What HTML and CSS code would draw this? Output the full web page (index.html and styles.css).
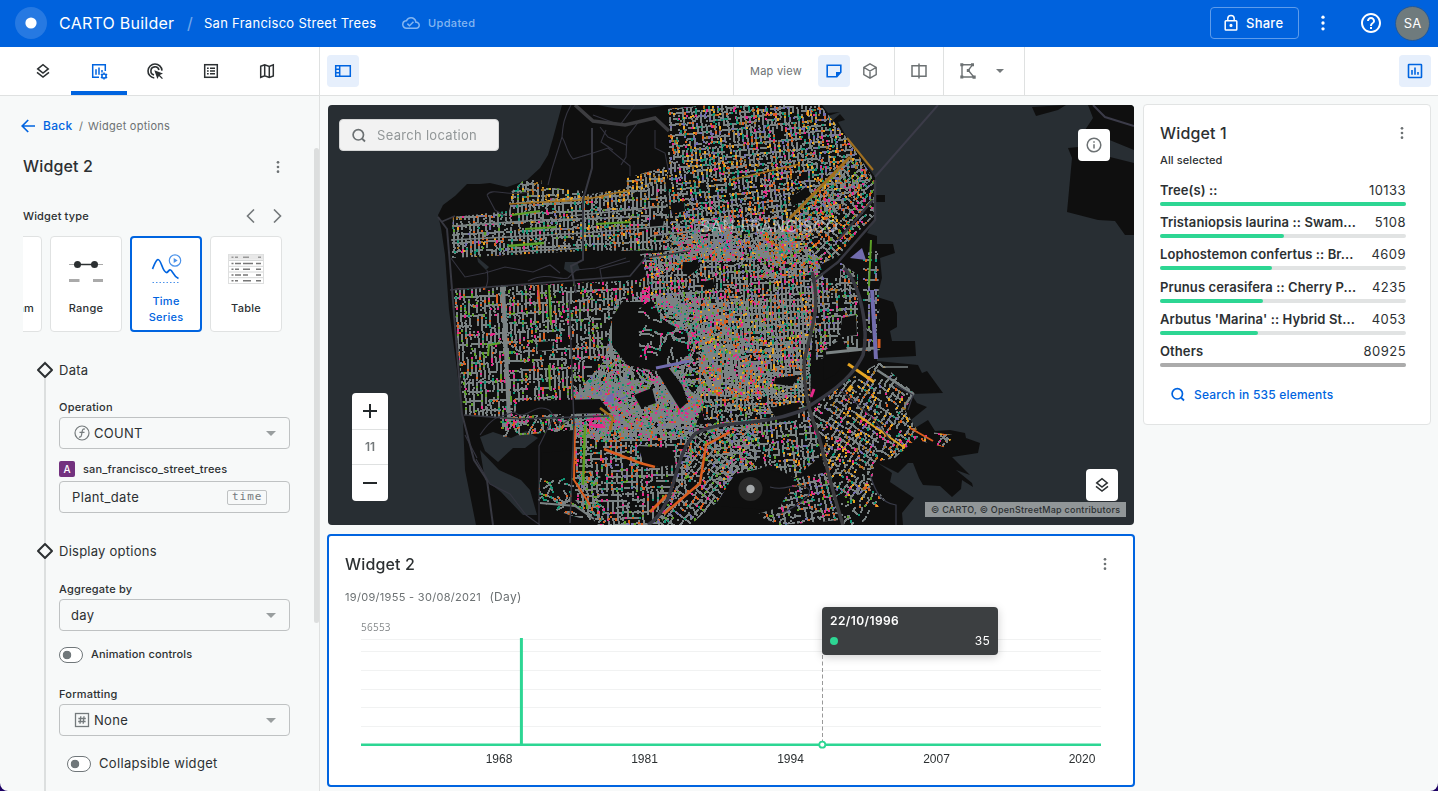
FILE: index.html
```html
<!DOCTYPE html>
<html lang="en">
<head>
<meta charset="utf-8">
<title>CARTO Builder</title>
<link rel="stylesheet" href="styles.css">
</head>
<body>
<svg width="0" height="0" class="defs">
  <symbol id="layers" viewBox="0 0 24 24"><path d="M5 9.2 12 3.6l7 5.6-7 5.6zM4 13.8l8 6.4 8-6.4" fill="none" stroke="currentColor" stroke-width="2"/></symbol>
  <symbol id="dots" viewBox="0 0 24 24"><circle cx="12" cy="5" r="2"/><circle cx="12" cy="12" r="2"/><circle cx="12" cy="19" r="2"/></symbol>
  <symbol id="search" viewBox="0 0 18 18"><circle cx="8.3" cy="8.8" r="5.2" fill="none" stroke="currentColor" stroke-width="1.7"/><path d="m12 12.500 3 3" stroke="currentColor" stroke-width="1.8"/></symbol>
  <symbol id="caret" viewBox="0 0 10 5"><path d="M0 0h10L5 5z"/></symbol>
  <symbol id="diamond" viewBox="0 0 18 18"><path d="m9 2 7 7-7 7-7-7z" fill="#f7f9f9" stroke="#2c3032" stroke-width="2" stroke-linejoin="round"/></symbol>
</svg>
<div class="app">
  <header class="header">
    <svg class="logo" viewBox="0 0 32 32"><circle cx="16" cy="16" r="16" fill="#fff" fill-opacity=".15"/><circle cx="16" cy="16" r="5.6" fill="#fff"/></svg>
    <span class="brand">CARTO Builder</span>
    <span class="slash">/</span>
    <span class="map-name">San Francisco Street Trees</span>
    <svg class="cloud" viewBox="0 0 24 24" fill="currentColor"><path d="M19.35 10.04A7.49 7.49 0 0 0 12 4C9.11 4 6.6 5.64 5.35 8.04A5.994 5.994 0 0 0 0 14c0 3.31 2.69 6 6 6h13c2.76 0 5-2.24 5-5 0-2.64-2.05-4.78-4.65-4.96zM19 18H6c-2.21 0-4-1.79-4-4 0-2.05 1.53-3.76 3.56-3.97l1.07-.11.5-.95A5.469 5.469 0 0 1 12 6c2.62 0 4.88 1.86 5.39 4.43l.3 1.5 1.53.11A2.98 2.98 0 0 1 22 15c0 1.65-1.35 3-3 3zm-9-3.82-2.09-2.09L6.5 13.5 10 17l6.01-6.01-1.41-1.41z"/></svg>
    <span class="updated">Updated</span>
    <span class="grow"></span>
    <span class="share"><svg viewBox="0 0 18 18" fill="none" stroke="currentColor" stroke-width="1.5"><rect x="3.2" y="6.7" width="11.6" height="9.4" rx=".8"/><path d="M5.8 6.5V4.6a3.2 3.2 0 0 1 6.4 0v1.9"/><circle cx="9" cy="11.4" r=".8" fill="currentColor"/></svg>Share</span>
    <svg class="head-dots" fill="currentColor"><use href="#dots"/></svg>
    <svg class="help" viewBox="0 0 24 24" fill="currentColor"><path d="M11 18h2v-2h-2v2zm1-16C6.48 2 2 6.48 2 12s4.48 10 10 10 10-4.48 10-10S17.52 2 12 2zm0 18c-4.41 0-8-3.59-8-8s3.59-8 8-8 8 3.59 8 8-3.59 8-8 8zm0-14c-2.21 0-4 1.79-4 4h2c0-1.1.9-2 2-2s2 .9 2 2c0 2-3 1.75-3 5h2c0-2.25 3-2.5 3-5 0-2.210-1.790-4-4-4z"/></svg>
    <span class="avatar">SA</span>
  </header>

  <div class="body">
    <aside class="side">
      <nav class="tabs">
        <span class="tab"><svg><use href="#layers"/></svg></span>
        <span class="tab active"><svg viewBox="0 0 18 18" fill="none" stroke="currentColor" stroke-width="1.5"><path d="M15.3 9V2.700H2.700v12.600H9M6 7.300v5.400M9 5.500v7.200M12 8v2.500"/><circle cx="14" cy="14" r="2.100"/><path d="M14 10.400v1.400M14 16.200v1.400M10.900 12.200l1.200.7M15.900 15.100l1.200.7M10.900 15.800l1.200-.7M15.900 12.900l1.200-.7"/></svg></span>
        <span class="tab"><svg viewBox="0 0 18 18" fill="none" stroke="currentColor" stroke-width="1.600"><path d="M8.300 16A7 7 0 1 1 16 8.600M8 12.900A4.100 4.100 0 1 1 13 8"/><path d="M8.300 8.300l8.700 3.200-3.200 1.500 3.100 3.200-.9.900-3.100-3.200-1.500 3.100z" fill="currentColor" stroke="none"/></svg></span>
        <span class="tab"><svg viewBox="0 0 18 18" fill="none" stroke="currentColor" stroke-width="1.500"><rect x="2.700" y="2.700" width="12.600" height="12.600"/><path d="M5 6.200h1.700M8 6.200h5M5 9h1.700M8 9h5M5 11.800h1.700M8 11.800h5"/></svg></span>
        <span class="tab"><svg viewBox="0 0 18 18" fill="none" stroke="currentColor" stroke-width="1.500"><path d="m2.700 4.200 4-1.500 4.600 1.700 4-1.600v11.100l-4 1.500-4.600-1.700-4 1.600zM6.700 2.700v11M11.300 4.400v11"/></svg></span>
      </nav>
      <div class="panel">
        <div class="crumbs"><svg viewBox="0 0 14 14" fill="none" stroke="currentColor" stroke-width="1.700"><path d="M14 7H1.500M7.200 1 1.200 7l6 6"/></svg><b>Back</b><i>/</i><span>Widget options</span></div>
        <div class="title-row"><h2>Widget 2</h2><svg><use href="#dots"/></svg></div>
        <div class="type-row"><span>Widget type</span><svg viewBox="0 0 36 14" fill="none" stroke="currentColor" stroke-width="1.600"><path d="M8 .5 1.500 7 8 13.500M28 .5 34.500 7 28 13.500"/></svg></div>
        <div class="types">
          <div class="type"><span>Histogram</span></div>
          <div class="type"><svg viewBox="0 0 40 40"><path d="M3 16.500h34" stroke="#aaa"/><path d="M11 16.500h18" stroke="#2c3032" stroke-width="1.500"/><circle cx="11.500" cy="16.500" r="3.500" fill="#2c3032"/><circle cx="28.500" cy="16.500" r="3.500" fill="#2c3032"/><path d="M3 32.500h10.500M27 32.500h10" stroke="#aaa" stroke-width="3"/></svg><span>Range</span></div>
          <div class="type on"><svg viewBox="0 0 40 40" fill="none" stroke="#0064e0"><path d="M6.500 21c1.500-3 3-9 5.500-9.500 3.500 0 4.500 14 9 13 2-1.500 2-3 3.500-2.500 2 .5 2.500 6 8 8.500" stroke-width="1.700"/><circle cx="29" cy="12.500" r="5.700" stroke="#4b92ea" stroke-width="1.200"/><path d="m27.700 10 4 2.500-4 2.500z" fill="#4b92ea" stroke="none"/><path d="M6.500 34.500h27" stroke="#4b92ea" stroke-dasharray="1.500 2"/></svg><span>Time<br>Series</span></div>
          <div class="type"><svg viewBox="0 0 40 40"><rect x="2.500" y="6.500" width="35" height="29" fill="#fff" stroke="#dedfdf"/><path d="M3 9.300h34" stroke="#e8e8e8" stroke-width="5"/><path d="M3 12.500h34M3 18.300h34M3 24h34M3 29.700h34" stroke="#d5d7d7"/><path d="M5.500 9.300h2m1.500 0h3m5 0h6m9 0h3" stroke="#999" stroke-width="1.500"/><path d="M5.500 15.500h2m1.500 0h6m2 0h10m3 0h5M5.500 21.200h2m1.500 0h4m4 0h7m6 0h5M5.500 27h2m1.500 0h6m2 0h5m8 0h5M5.500 32.700h2m1.500 0h3m5 0h8m5 0h5" stroke="#777" stroke-width="1.500"/></svg><span>Table</span></div>
        </div>
        <div class="steps">
          <section class="step data">
            <h3><svg><use href="#diamond"/></svg>Data</h3>
            <label>Operation</label>
            <div class="field"><svg class="ic" viewBox="0 0 16 16" fill="none" stroke="#747a7c" stroke-width="1.200"><circle cx="8" cy="8" r="7"/><path d="M11 4.200c-1.500-.7-2.500.3-2.800 2l-.7 4c-.3 1.500-1.200 2.300-2.500 1.700M5.500 7.300h5" /></svg><span>COUNT</span><svg class="caret"><use href="#caret"/></svg></div>
            <div class="source"><b>A</b>san_francisco_street_trees</div>
            <div class="field plant"><span>Plant_date</span><code>time</code></div>
          </section>
          <section class="step display">
            <h3><svg><use href="#diamond"/></svg>Display options</h3>
            <label>Aggregate by</label>
            <div class="field day"><span>day</span><svg class="caret"><use href="#caret"/></svg></div>
            <div class="switch small"><i></i><span>Animation controls</span></div>
            <label>Formatting</label>
            <div class="field"><svg class="ic" viewBox="0 0 16 16" fill="none" stroke="#747a7c" stroke-width="1.300"><rect x="1.500" y="1.500" width="13" height="13"/><path d="M6.800 4.200 6 11.800M10 4.200l-.8 7.600M4.400 6.500h7.400M4.200 9.500h7.400"/></svg><span>None</span><svg class="caret"><use href="#caret"/></svg></div>
            <div class="switch large"><i></i><span>Collapsible widget</span></div>
          </section>
        </div>
        <span class="scroll"></span>
      </div>
    </aside>

    <div class="main">
      <div class="toolbar">
        <span class="tool on"><svg viewBox="0 0 18 18" fill="none" stroke="currentColor" stroke-width="1.500"><path d="M1.700 3.700h14.600v10.600H1.700zM5.700 3.700v10.600M1.700 7.200h4M1.700 10.800h4"/></svg></span>
        <div class="view">
          <span class="view-label">Map view</span>
          <span class="tool on"><svg viewBox="0 0 18 18" fill="none" stroke="currentColor" stroke-width="1.600"><path d="M2.200 3.200h13.600v7l-4 4.600H2.200z"/><path d="M11 15v-5h5z" fill="currentColor" stroke="none"/></svg></span>
          <span class="tool"><svg viewBox="0 0 18 18" fill="none" stroke="currentColor" stroke-width="1.400"><path d="m9 1.900 6.200 3.500v7.200L9 16.100l-6.200-3.500V5.400zM2.800 5.400 9 9l6.200-3.600M9 9v7"/></svg></span>
        </div>
        <div class="split"><svg viewBox="0 0 18 18" fill="none" stroke="currentColor" stroke-width="1.500"><path d="M2 3.700h14v10.600H2zM9 1.500v15"/></svg></div>
        <div class="poly"><svg viewBox="0 0 18 18" fill="none" stroke="currentColor" stroke-width="1.400"><path d="M3 2.800h10.500L9.300 8.300l5.500 6.700H3z"/><path d="M1.300 1.300h3v3h-3zM12 1.300h3v3h-3zM7.800 7h3v3h-3zM1.300 13.500h3v3h-3zM13.500 13.500h3.200v3.200h-3.200z" fill="currentColor" stroke="none"/></svg><svg class="caret"><use href="#caret"/></svg></div>
        <span class="grow"></span>
        <span class="tool on"><svg viewBox="0 0 18 18" fill="none" stroke="currentColor" stroke-width="1.600"><rect x="2.500" y="2.500" width="13" height="13" rx=".5"/><path d="M6 8v4.800M9 5.500v7.300M12 10v2.800"/></svg></span>
      </div>
      <div class="content">
        <div class="center">
          <div class="map">
            <svg class="map-layer" viewBox="328 105 806 420">
              <path fill="#0f0f0f" d="M562 105 553 138 548 155 540 168 527 180 507 187 490 183 480 184 467 184 455 196 443 205 438 215 441 228 445 255 449 310 457 370 463 420 465 470 476 525H903L902 513 914 498 890 482 892 473 878 463 898 473 908 463 913 463 919 478 923 485 940 486 952 497 961 489 962 480 973 487 972 483 956 470 970 475 952 457 978 453 980 443 966 438 965 433 950 430 935 431 928 420 915 428 911 420 927 407 917 403 911 394 943 393 927 371 922 373 918 365 877 361 877 358 916 356 915 341 892 341 890 331 897 327 897 313 893 302 877 297 882 278 880 258 895 253 893 244 877 244 877 236 867 233 875 218V202h10v-7h-10V177L847 138 838 122 845 120 840 114 832 121 828 116 840 112 828 113 822 105Z"/>
              <path fill="#0f0f0f" d="M1032 107 1066 105 1058 110 1036 116ZM1088 105 1093 118 1085 130 1134 150V105ZM1068 148 1072 158 1067 212 1098 220 1115 221 1125 235H1134V163L1110 157 1078 147Z"/>
              <g fill="#282e33"><path d="M598 105h68c-20 5-40 7-68 0zM480 437l13-5 18 6 15-7 12 7-13 10h-12l-15 14-13-11z"/><path d="m480 450 19 20 22 10 9 10 7 25h-14l-22-23-16-12zM477 257l12 10-3 3-8-8zM565 262h12l3 8-10 3-6-4z"/></g>
              <path d="m1093 105 12 12 29 9M875 177l63-72" fill="none" stroke="#3b3b48" stroke-width="2"/>
            </svg>
            <canvas id="trees" class="map-layer" width="806" height="420"></canvas>
            <svg class="map-layer" viewBox="328 105 806 420" fill="none">
              <g stroke="#34343f" stroke-width="1.100"><path d="M571 105c-8 14-8 22-9 32l-10 32-4 16M562 137c5 8 4 14 11 22l20-6 15-5 22 18v10M600 127l8 10 18 8M640 120l-13 17-1 20-5 8M593 115l27 10 15-20M487 195c5-8 20 2 42-3M487 195l8 15 10 6M655 130v18l10 5 4 20M606 130l-5 12 12 8"/><path d="M451 258l14 19 20-4 20-6 28 5 17-7 10 8M487 270c2 10 0 15-2 20M528 281c20-10 30 0 40-3l8-8 20-2 30-10M602 281l-2-12 30-8"/><path d="M465 435l12 23M480 435c8-12 15-18 22-19l12-4c12 10 20-10 35-2l12 15 12-8M554 416l-15 30v79M476 459l14 25 20 10 16 21 14 10"/></g>
              <g stroke="#373841"><path d="M438 217l9 12 3 35 12 150 12 46 13 20 6 45" stroke-width="2"/><path d="M441 222l14-6M450 290l180-14 15-18 45-7" stroke-width="1.700"/><path d="M592 128v40l-9 32v60l-12 6 5 27" stroke-width="2"/><path d="M569 293l5 130-4 100" stroke-width="1.500"/><path d="M575 105l18 16 32 4 30-7 14 13" stroke-width="3.500" stroke="#3d3d40"/><path d="M464 415l55 4 90-3" stroke-width="1.700"/><path d="M648 525c30-20 24-70 48-92 30-15 55-4 105-22 25-15 50-30 62-56 6-25-2-70-19-87" stroke-width="3.500"/><path d="M812 272c10 35-2 60-8 90 0 30 5 50 15 75 8 30 12 50 24 88" stroke-width="3.500" stroke="#3c3c3f"/><path d="M875 180v40l-37 42-26 20M838 240l35-40" stroke-width="2.500"/></g>
              <g stroke="#393b49" stroke-width="1.200"><path d="M770 487c18 5 20-5 35 0s-10 20-25 27M870 475c5 15 10 28 26 30v20M895 385l18 10-5 15M840 390c18 15 30 22 50 50"/></g>
              <text class="city" x="700" y="232" textLength="138">SAN FRANCISCO</text>
              <circle cx="750.500" cy="489" r="12" fill="#999" fill-opacity=".2"/><circle cx="750.500" cy="489" r="4.200" fill="#a5a9ab"/>
            </svg>
            <div class="map-search"><svg><use href="#search"/></svg>Search location</div>
            <span class="map-btn info"><svg viewBox="0 0 18 18" fill="none" stroke="currentColor" stroke-width="1.500"><circle cx="9" cy="9" r="6.800"/><path d="M9 8.200v4.300M9 5.200v1.600"/></svg></span>
            <div class="zoom"><span><svg viewBox="0 0 14 14"><path d="M0 7h14M7 0v14"/></svg></span><em>11</em><span><svg viewBox="0 0 14 14"><path d="M0 7h14"/></svg></span></div>
            <span class="map-btn lay"><svg><use href="#layers"/></svg></span>
            <span class="credits">© CARTO, © OpenStreetMap contributors</span>
          </div>
          <div class="series">
            <div class="card-head"><h2>Widget 2</h2><svg><use href="#dots"/></svg></div>
            <p class="range">19/09/1955 - 30/08/2021 <span>(Day)</span></p>
            <svg class="chart" viewBox="345 612 776 160">
              <path d="M361 639.500h740M361 651.500h740M361 670.500h740M361 689.500h740M361 707.500h740M361 726.500h740" stroke="#f1f2f2"/>
              <text class="max" x="361" y="631">56553</text>
              <path d="M822.500 655v86" stroke="#999" stroke-dasharray="4 2.500"/>
              <path d="M361 744.700h740" stroke="#2dd693" stroke-width="2.600"/>
              <path d="M521.400 745V638" stroke="#2dd693" stroke-width="3"/>
              <circle cx="822.300" cy="744.700" r="3" fill="#fff" stroke="#2dd693" stroke-width="1.800"/>
              <g class="years"><text x="499" y="763">1968</text><text x="644.500" y="763">1981</text><text x="790.500" y="763">1994</text><text x="936.500" y="763">2007</text><text x="1082" y="763">2020</text></g>
            </svg>
            <div class="tip"><b>22/10/1996</b><div><i></i><span>35</span></div></div>
          </div>
        </div>
        <div class="category">
          <div class="card-head"><h2>Widget 1</h2><svg><use href="#dots"/></svg></div>
          <p class="selected">All selected</p>
          <div class="cat"><b>Tree(s) ::</b><span>10133</span><i><u style="width:100%"></u></i></div>
          <div class="cat"><b>Tristaniopsis laurina :: Swam...</b><span>5108</span><i><u style="width:50.4%"></u></i></div>
          <div class="cat"><b>Lophostemon confertus :: Br...</b><span>4609</span><i><u style="width:45.5%"></u></i></div>
          <div class="cat"><b>Prunus cerasifera :: Cherry P...</b><span>4235</span><i><u style="width:41.8%"></u></i></div>
          <div class="cat"><b>Arbutus 'Marina' :: Hybrid St...</b><span>4053</span><i><u style="width:40%"></u></i></div>
          <div class="cat others"><b>Others</b><span>80925</span><i><u style="width:100%"></u></i></div>
          <div class="find"><svg><use href="#search"/></svg>Search in 535 elements</div>
        </div>
      </div>
    </div>
  </div>
</div>
<script src="trees.js"></script>
</body>
</html>
```
FILE: styles.css
```css
* { box-sizing: border-box; }
body { margin: 0; background: #1c0063; font-family: Inter, "Liberation Sans", sans-serif; letter-spacing: .25px; color: #2c3032; font-size: 13px; }
h2, h3, p { margin: 0; font-weight: 400; }
i, em { font-style: normal; }
.defs { position: absolute; }
.app { height: 791px; display: flex; flex-direction: column; background: #f7f9f9; border-radius: 0 0 8px 8px; overflow: hidden; }
.grow { flex: 1; }

.header { height: 47px; flex: none; background: #0062dd; color: #fff; display: flex; align-items: center; padding: 0 8px 1px 15px; }
.logo { width: 32px; height: 32px; margin-right: 12px; }
.brand { font-size: 16px; width: 128px; white-space: nowrap; letter-spacing: .25px; }
.slash { width: 17px; font-size: 16px; opacity: .45; }
.map-name { width: 198px; font-size: 13px; white-space: nowrap; letter-spacing: .28px; }
.cloud { width: 18px; height: 18px; color: #84b6f1; }
.updated { color: #84b6f1; font-size: 11px; margin-left: 8px; font-weight: 500; letter-spacing: .35px; }
.share { width: 89px; height: 32px; border: 1px solid #5e9ceb; border-radius: 4px; display: flex; align-items: center; padding-left: 11px; font-weight: 500; gap: 6px; }
.share svg { width: 18px; height: 18px; }
.head-dots { width: 20px; height: 20px; margin: 0 26px 0 14px; }
.help { width: 24px; height: 24px; margin-right: 12px; }
.avatar { width: 35px; height: 35px; border-radius: 50%; background: #6f7b7d; border: 1px solid #21599c; display: grid; place-items: center; font-size: 13px; letter-spacing: 0; }

.body { flex: 1; display: flex; min-height: 0; }
.side { width: 320px; border-right: 1px solid #dfe1e1; display: flex; flex-direction: column; }
.tabs { height: 49px; flex: none; background: #fff; border-bottom: 1px solid #dfe1e1; display: flex; padding-left: 15px; }
.tab { width: 56px; height: 48px; display: grid; place-items: center; border-bottom: 4px solid transparent; padding-top: 4px; }
.tab svg { width: 18px; height: 18px; }
.tab.active { color: #0064e0; border-color: #0064e0; }
.panel { flex: 1; position: relative; padding: 14px 29px 0 23px; overflow: hidden; min-height: 0; }
.crumbs { display: flex; align-items: center; height: 32px; font-size: 11px; color: #6c7173; }
.crumbs svg { width: 14px; height: 14px; margin: 0 8px 0 -2px; color: #0064e0; }
.crumbs b { font-size: 12px; font-weight: 500; color: #0064e0; width: 36px; letter-spacing: .3px; padding-bottom: 1px; }
.crumbs i { width: 9px; }
.title-row { height: 50px; display: flex; align-items: center; justify-content: space-between; }
h2 { font-size: 16px; font-weight: 500; letter-spacing: .15px; }
.title-row h2 { padding-bottom: 2px; }
.title-row svg, .card-head svg { width: 16px; height: 16px; fill: #6c7173; }
.title-row svg { margin-right: 4px; }
.type-row { height: 48px; display: flex; align-items: center; justify-content: space-between; font-size: 11px; font-weight: 500; letter-spacing: .15px; }
.type-row svg { width: 38px; height: 14px; margin-right: 7px; color: #74797b; }
.types { display: flex; gap: 8px; width: 259px; overflow: hidden; margin-top: -4px; }
.type { flex: none; width: 72px; height: 96px; border: 1px solid #e0e2e2; border-radius: 4px; background: #fff; display: flex; flex-direction: column; align-items: center; justify-content: space-between; padding: 11px 0 15px; font-size: 11px; font-weight: 500; line-height: 16px; text-align: center; }
.type:first-child { margin-left: -53px; justify-content: flex-end; letter-spacing: .2px; }
.type svg { width: 40px; height: 40px; flex: none; }
.type.on { border: 2px solid #0064e0; color: #0064e0; padding: 10px 0 5px; }
.steps { position: relative; margin-left: 21px; margin-top: 29px; border-left: 2px solid #dcdfdf; padding-left: 13px; width: 246px; height: 440px; }
.step h3 { height: 18px; display: flex; align-items: center; font-size: 13px; }
.step h3 svg { width: 18px; height: 18px; margin: 0 5px 0 -23px; }
.data { height: 181px; }
label { display: block; font-size: 11px; font-weight: 500; height: 14px; line-height: 14px; margin-bottom: 3px; letter-spacing: .2px; }
.data label { margin-top: 21px; }
.display label { margin-top: 22px; }
.field { width: 231px; height: 32px; border: 1px solid #bfc2c3; border-radius: 4px; display: flex; align-items: center; padding: 0 13px 0 14px; }
.field span { flex: 1; padding-left: 4px; letter-spacing: .3px; }
.field .ic { width: 16px; height: 16px; }
.caret { width: 10px; height: 5px; fill: #999e9f; }
.source { height: 16px; margin: 12px 0 4px; display: flex; align-items: center; font-size: 11px; font-weight: 500; gap: 8px; letter-spacing: .15px; }
.source b { width: 16px; height: 16px; background: #73327f; color: #fff; border-radius: 2px; font-size: 10px; font-weight: 500; display: grid; place-items: center; letter-spacing: 0; }
.plant { padding: 0 22px 0 8px; }
.plant span { letter-spacing: .35px; }
.day { padding-left: 7px; }
.day span { padding-bottom: 1px; }
code { font: 11px "DejaVu Sans Mono", monospace; letter-spacing: 1px; color: #747a7c; border: 1px solid #bfc2c3; border-radius: 2px; padding: 0 4px; width: 40px; height: 15px; line-height: 12px; }
.switch { display: flex; align-items: center; gap: 8px; height: 16px; }
.switch span { padding-bottom: 2px; }
.switch i { width: 24px; height: 16px; border: 1px solid #70777a; border-radius: 8px; background: #fff radial-gradient(circle at 7px 7px, #70777a 4px, transparent 4.600px); }
.small { font-size: 11px; font-weight: 500; margin-top: 16px; letter-spacing: .15px; }
.display .small + label { margin-top: 24px; }
.large { margin: 20px 0 0 8px; letter-spacing: .33px; }
.scroll { position: absolute; right: 0; top: 52px; width: 5px; height: 475px; background: #dcdede; border-radius: 3px; }

.main { flex: 1; display: flex; flex-direction: column; min-width: 0; }
.toolbar { height: 49px; flex: none; background: #fff; border-bottom: 1px solid #dfe1e1; display: flex; align-items: center; padding: 0 7px; color: #6c7173; }
.tool { width: 32px; height: 32px; border-radius: 4px; display: grid; place-items: center; }
.toolbar svg { width: 18px; height: 18px; }
.tool.on { background: #e6effc; color: #0064e0; }
.view { margin-left: 374px; width: 162px; height: 48px; border-left: 1px solid #dfe1e1; border-right: 1px solid #dfe1e1; padding-left: 16px; display: flex; align-items: center; gap: 4px; font-size: 11px; }
.view-label { width: 64px; white-space: nowrap; }
.split, .poly { height: 48px; border-right: 1px solid #dfe1e1; display: flex; align-items: center; }
.split { width: 49px; padding-left: 15px; }
.poly { width: 81px; padding-left: 15px; gap: 19px; }
.toolbar .caret { width: 8px; height: 4px; fill: #74797b; }
.content { display: flex; gap: 8px; padding: 8px 7px 0; align-items: flex-start; }
.center { width: 808px; display: flex; flex-direction: column; gap: 9px; }
.map { position: relative; width: 806px; height: 420px; margin: 1px 0 0 1px; background: #282e33; border-radius: 4px; overflow: hidden; }
.map-layer { position: absolute; inset: 0; width: 806px; height: 420px; }
.city { font-size: 16px; letter-spacing: 0; fill: #d5e3ea; fill-opacity: .6; }
.map-search { position: absolute; left: 11px; top: 14px; width: 160px; height: 32px; background: #f2f2f2; border: 1px solid #d5d6d6; border-radius: 4px; color: #929798; display: flex; align-items: center; padding-left: 10px; gap: 9px; letter-spacing: .3px; }
.map-search svg { width: 18px; height: 18px; color: #6c7173; }
.map-btn { position: absolute; width: 32px; height: 32px; background: #fff; border-radius: 4px; display: grid; place-items: center; }
.map-btn svg { width: 18px; height: 18px; }
.info { left: 750px; top: 24px; color: #6c7173; }
.lay { left: 758px; top: 364px; }
.zoom { position: absolute; left: 24px; top: 288px; width: 36px; height: 108px; background: #fff; border-radius: 4px; text-align: center; }
.zoom span { display: grid; place-items: center; height: 36px; }
.zoom svg { width: 14px; height: 14px; stroke: #23282a; stroke-width: 2; }
.zoom em { display: block; height: 36px; line-height: 34px; border: solid #dfe1e1; border-width: 1px 0; color: #74797b; font-size: 12px; font-weight: 600; letter-spacing: 0; }
.credits { position: absolute; right: 8px; bottom: 8px; height: 15px; width: 201px; line-height: 15px; padding-left: 6px; background: #919698; font-size: 9px; font-weight: 500; white-space: nowrap; }
.series { position: relative; height: 253px; border: 2px solid #0064e0; border-radius: 4px; background: #fff; padding: 16px; }
.card-head { display: flex; justify-content: space-between; align-items: center; height: 24px; }
.series .card-head svg { margin-right: 4px; }
.range { margin-top: 14px; height: 14px; line-height: 14px; font-size: 11px; color: #6c7173; letter-spacing: .3px; }
.range span { margin-left: 5px; font-size: 12px; }
.chart { width: 776px; height: 160px; margin-top: 8px; display: block; }
.max { font: 10px "Open Sans", sans-serif; fill: #85898b; }
.years { font: 12px "Liberation Sans", sans-serif; letter-spacing: 0; text-anchor: middle; fill: #2c3032; }
.tip { position: absolute; left: 493px; top: 71px; width: 176px; height: 48px; background: #3c3f41; border-radius: 4px; color: #fff; font-size: 12px; padding: 6px 8px; line-height: 16px; box-shadow: 0 2px 10px rgba(0,0,0,.2); }
.tip b { font-weight: 600; letter-spacing: .4px; }
.tip div { display: flex; justify-content: space-between; align-items: center; margin-top: 4px; }
.tip i { width: 8px; height: 8px; border-radius: 50%; background: #2dd693; }
.category { width: 288px; height: 321px; background: #fff; border: 1px solid #e2e4e4; border-radius: 4px; padding: 16px 24px 0 16px; }
.category .card-head svg { margin-right: -4px; }
.selected { font-size: 11px; font-weight: 500; margin: 8px 0 13px; line-height: 14px; letter-spacing: .1px; }
.cat { display: flex; flex-wrap: wrap; justify-content: space-between; align-content: flex-start; height: 32.200px; line-height: 18px; padding-top: 1px; }
.cat b { font-weight: 600; letter-spacing: .1px; white-space: nowrap; }
.cat span { letter-spacing: .45px; }
.cat i { width: 100%; height: 4px; background: #e1e3e3; border-radius: 2px; margin-top: 3px; }
.cat u { display: block; height: 4px; border-radius: 2px; background: #2dd693; }
.others u { background: #ababab; }
.find { display: flex; align-items: center; gap: 7px; margin: 12px 0 0 9px; font-size: 12px; font-weight: 500; color: #0064e0; letter-spacing: .2px; }
.find svg { width: 18px; height: 18px; }
```
FILE: trees.js
```javascript
// Street tree points, generated along the street grid of each district.
const ctx = document.getElementById('trees').getContext('2d');
ctx.translate(-328, -105);

let seed = 7;
function rnd() {
  seed = (seed * 1664525 + 1013904223) >>> 0;
  return seed / 4294967296;
}

const GRAY = '#7b8384';
const C = { t: '#109474', o: '#db5f1f', p: '#726cae', k: '#e7298a', g: '#5ba027', y: '#e6a422', b: '#a2701f' };

function pick(mix) { return C[mix[Math.floor(rnd() * mix.length)]]; }

function trace(pts) {
  ctx.beginPath();
  for (let i = 0; i < pts.length; i += 2) ctx.lineTo(pts[i], pts[i + 1]);
  ctx.closePath();
}

// angle in degrees, sx/sy are the street spacings, fill is the share of street that has trees
function grid(pts, angle, sx, sy, fill, colour, mix) {
  ctx.save();
  trace(pts);
  ctx.clip();
  let x0 = 1e4, x1 = 0, y0 = 1e4, y1 = 0;
  for (let i = 0; i < pts.length; i += 2) {
    x0 = Math.min(x0, pts[i]); x1 = Math.max(x1, pts[i]);
    y0 = Math.min(y0, pts[i + 1]); y1 = Math.max(y1, pts[i + 1]);
  }
  const cx = (x0 + x1) / 2, cy = (y0 + y1) / 2;
  const r = Math.hypot(x1 - x0, y1 - y0) / 2;
  const a = angle * Math.PI / 180, ca = Math.cos(a), sa = Math.sin(a);
  const late = [];
  function dot(u, v) {
    const x = cx + u * ca - v * sa, y = cy + u * sa + v * ca;
    if (x < x0 || x > x1 || y < y0 || y > y1) return;
    const px = Math.round(x), py = Math.round(y);
    if (rnd() < colour * 0.52) late.push(px, py);
    ctx.fillStyle = GRAY;
    ctx.fillRect(px, py, 2, 2);
  }
  function line(along, w) {
    let on = true;
    for (let k = -r; k < r; k += 1.7) {
      if (rnd() < 0.45) on = rnd() < fill;
      if (!on) continue;
      const j = rnd() < 0.14 ? (rnd() - 0.5) * 4 : 0;
      if (along) dot(k, w + j); else dot(w + j, k);
    }
  }
  for (let w = -r; w < r; w += sx) line(false, w);
  for (let w = -r; w < r; w += sy) line(true, w);
  // coloured points go over the gray ones
  for (let i = 0; i < late.length; i += 2) {
    ctx.fillStyle = pick(mix);
    ctx.fillRect(late[i], late[i + 1], 2, rnd() < 0.25 ? 3 : 2);
  }
  ctx.restore();
}

// winding hillside streets
function hills(pts, n, colour, mix) {
  ctx.save();
  trace(pts);
  ctx.clip();
  let x0 = 1e4, x1 = 0, y0 = 1e4, y1 = 0;
  for (let i = 0; i < pts.length; i += 2) {
    x0 = Math.min(x0, pts[i]); x1 = Math.max(x1, pts[i]);
    y0 = Math.min(y0, pts[i + 1]); y1 = Math.max(y1, pts[i + 1]);
  }
  for (let i = 0; i < n; i++) {
    let x = x0 + rnd() * (x1 - x0), y = y0 + rnd() * (y1 - y0), a = rnd() * 6.28;
    const bend = (rnd() - 0.5) * 0.5, len = 3 + rnd() * 7;
    for (let k = 0; k < len; k++) {
      ctx.fillStyle = rnd() < colour ? pick(mix) : GRAY;
      ctx.fillRect(Math.round(x), Math.round(y), 2, 2);
      x += Math.cos(a) * 2; y += Math.sin(a) * 2; a += bend;
    }
  }
  ctx.restore();
}

function street(pts, colour, width) {
  ctx.strokeStyle = colour;
  ctx.lineWidth = width || 2;
  ctx.beginPath();
  for (let i = 0; i < pts.length; i += 2) ctx.lineTo(pts[i], pts[i + 1]);
  ctx.stroke();
}

function park(pts, colour) {
  trace(pts);
  ctx.fillStyle = colour || '#0f0f0f';
  ctx.fill();
}

// Richmond
grid([453,217,509,211,511,203,540,199,583,197,627,190,665,178,672,250,583,251,451,258], -3, 4.1, 8.5, .83, .36, 'tokgobpty');
grid([509,204,511,192,523,181,541,179,542,187,583,191,583,201], -3, 5, 6, .75, .5, 'yyybgot');
grid([540,201,626,189,627,178,668,166,668,178,627,196,540,205], -4, 4.5, 7, .88, .55, 'yybbo');
// Sunset
grid([453,289,600,282,640,280,648,275,650,297,620,302,612,335,626,360,640,385,610,400,573,400,540,405,525,420,464,415], -3, 4.1, 9.5, .74, .38, 'tookggk');
grid([640,254,690,251,692,258,648,282], -8, 5, 7, .85, .45, 'tokpy');
// northern and central districts
grid([668,109,712,105,820,105,847,138,873,178,782,262,690,262,672,252,668,180], -6, 4.4, 5.4, .76, .58, 'tttpyybookp');
grid([648,255,790,225,815,255,818,300,812,348,806,390,780,400,700,395,698,330,650,300], -3, 3.8, 6.2, .84, .4, 'tooypkkg');
grid([692,300,812,296,810,405,780,416,700,402], -3, 3.9, 6, .8, .36, 'yyootkg');
// South of Market
grid([851,155,874,180,874,216,850,240,835,262,815,275,760,280,755,252], -43, 5.6, 6.2, .76, .65, 'yookpbtg');
grid([812,255,840,262,858,275,858,350,816,360], -3, 4.5, 6.5, .82, .34, 'tkopgb');
// hills
hills([615,300,700,290,700,400,690,430,600,425,575,395,605,360], 860, .24, 'ttkkogp');
hills([573,390,665,375,705,400,690,440,575,440], 520, .28, 'kktogp');
hills([500,418,573,412,573,430,502,437], 60, .45, 'otgk');
// Ingleside and Excelsior
grid([575,425,700,420,690,470,660,525,598,525,575,500], -2, 5, 6, .74, .42, 'oogktp');
grid([695,425,760,418,755,470,690,525,655,525,680,480], 38, 5, 6, .74, .42, 'toogkp');
grid([700,400,812,412,822,455,795,478,770,465,740,475,720,488], -6, 4.8, 6.2, .7, .45, 'oktgyp');
hills([540,475,600,470,603,525,560,512,538,500], 55, .35, 'ttgo');
// Bayview
grid([838,385,863,372,880,362,914,393,905,410,920,435,895,458,875,462,870,490,848,499,828,484,818,438,812,410], 33, 5.5, 6, .68, .5, 'yyoptbk');
grid([795,478,830,472,840,520,780,525,755,515,780,507], -13, 5.4, 6, .68, .48, 'oopgtk');
grid([830,498,870,480,885,500,860,525,845,525], 35, 7, 9, .4, .45, 'yogt');
grid([862,254,878,250,880,350,864,352], 0, 7, 10, .65, .5, 'pptgo');
hills([915,430,953,435,947,448,918,440], 13, .5, 'ooyk');

// parks, lakes and yards
park([612,318,622,302,653,302,662,320,687,333,691,352,675,365,655,371,627,365,612,345]);
park([683,262,698,259,699,268,689,276,682,271]);
park([703,282,713,279,715,288,705,290]);
park([656,370,668,367,682,385,688,402,680,409,668,390]);
park([634,395,652,388,656,403,641,408]);
park([520,401,600,399,611,413,514,415]);
park([638,446,672,448,676,465,645,468]);
park([541,453,574,450,574,475,542,481]);
park([775,378,800,375,792,386,774,384]);
park([735,474,765,468,785,474,790,493,770,510,715,506]);
park([770,408,800,402,796,420,778,422]);
park([842,318,856,315,857,335,840,337]);
park([790,198,806,187,812,195,792,207]);
park([670,205,684,201,685,211,672,214]);
park([650,220,664,218,663,227,650,228]);
park([538,342,553,341,552,350,537,351]);
park([820,265,840,255,840,278,824,278]);
park([823,352,842,338,850,356,835,375,824,380]);

hills([638,308,700,302,692,365,640,365], 55, .3, 'kt');

// wide gray avenues
[[451,240,583,233,668,226], [452,226,540,220,640,217], [570,216,668,206], [650,236,700,230], [508,252,583,248]].forEach(s => street(s, GRAY, 1.5));
hills([668,225,740,215,745,262,672,262], 110, .3, 'otpk');

// boulevards with one dominant species
street([503,285,509,419], GRAY, 4);
street([512,215,540,211], C.g);
street([525,229,556,227], C.g);
street([596,224,631,222], C.g);
street([508,246,544,243], C.g, 2.5);
street([509,204,583,200,630,190], C.b, 1.5);
street([538,285,540,310], C.o);
street([549,285,551,325], C.g);
street([549,365,550,390], C.g);
street([500,343,489,345,488,356], C.g);
street([585,425,583,485], C.g, 2.5);
street([575,426,574,480,590,505], C.o, 2);
street([604,449,640,463,655,467], C.o, 2.5);
street([664,514,700,483,706,445,730,432], C.o, 2.5);
street([650,512,667,495], C.o, 3);
street([600,408,613,418,610,431], C.b, 2.5);
street([850,157,790,218], C.b, 3);
street([847,138,873,170], C.b, 2);
street([730,180,800,164], C.b, 1.5);
street([848,364,874,382], C.y, 3);
street([848,391,852,386], C.y, 4);
street([856,414,905,448], C.y, 2);
street([656,368,690,361], C.p, 3);
street([872,290,876,359], C.p, 4);
street([871,240,869,286], C.g, 2);
street([877,370,913,394,905,405], GRAY, 2.5);
street([826,353,874,348], GRAY, 3);
street([882,367,908,367], GRAY, 1.5);
street([540,503,575,506,594,519], GRAY, 2);
street([811,397,814,389], C.k, 3);
street([910,428,933,441], C.o, 2);
street([879,339,879,348], C.o, 3);
park([850,258,862,248,866,260], C.p);
park([608,395,613,393,614,403,605,401], C.p);
hills([642,286,650,286,650,305,641,304], 8, 1, 'k');
hills([585,416,603,414,606,428,590,428], 8, 1, 'k');
hills([836,438,845,438,846,450,836,450], 5, 1, 'k');
```
